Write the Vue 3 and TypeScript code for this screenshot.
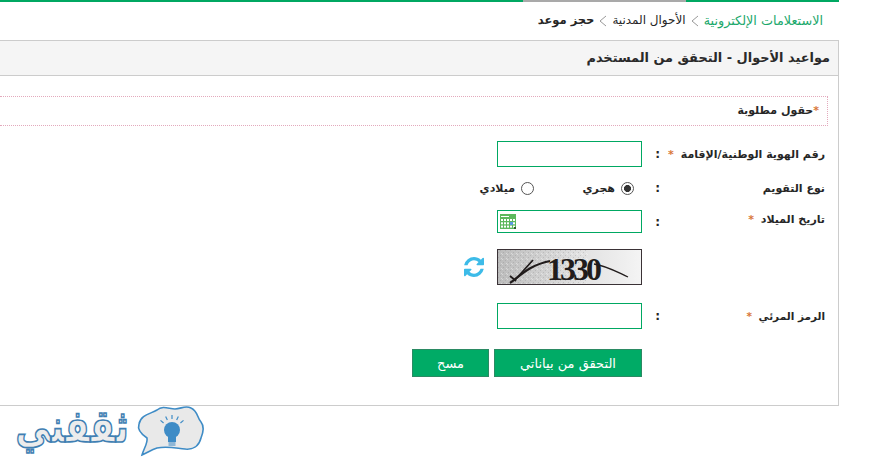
<script setup lang="ts">
const crumbs = ["الاستعلامات الإلكترونية", "الأحوال المدنية", "حجز موعد"];
const calCols = [0, 1, 2, 3, 4];
const calRows = [0, 1, 2];
const rays = [-50, -25, 0, 25, 50];
</script>

<template>
  <div class="page">
    <div class="wrap" dir="rtl">
      <div class="topline" dir="ltr">
        <span class="seg long"></span>
        <span class="seg grey"></span>
        <span class="seg short-seg"></span>
      </div>

      <nav class="crumbs">
        <span class="first">{{ crumbs[0] }}</span>
        <svg class="chev" width="8" height="12" viewBox="0 0 8 12"><path d="M7 1 1 6l6 5" fill="none" stroke="#999" /></svg>
        <span class="mid">{{ crumbs[1] }}</span>
        <svg class="chev" width="8" height="12" viewBox="0 0 8 12"><path d="M7 1 1 6l6 5" fill="none" stroke="#999" /></svg>
        <span class="last">{{ crumbs[2] }}</span>
      </nav>

      <section class="panel">
        <h1 class="head">مواعيد الأحوال - التحقق من المستخدم</h1>
        <div class="body">
          <div class="notice"><span class="star">*</span>حقول مطلوبة</div>

          <div class="row first-row">
            <label class="lbl">رقم الهوية الوطنية/الإقامة <span class="star">*</span></label>
            <span class="colon">:</span>
            <input class="field" type="text" />
          </div>

          <div class="row radio-row">
            <label class="lbl">نوع التقويم</label>
            <span class="colon">:</span>
            <div class="radios">
              <span class="opt"><i class="radio on"></i>هجري</span>
              <span class="opt"><i class="radio"></i>ميلادي</span>
            </div>
          </div>

          <div class="row date-row">
            <label class="lbl date-lbl">تاريخ الميلاد <span class="star">*</span></label>
            <span class="colon">:</span>
            <div class="date">
              <input class="field short" type="text" />
              <svg class="cal" width="16" height="15" viewBox="0 0 16 15">
                <rect width="16" height="15" fill="#5cb85c" />
                <rect x="1" y="2" width="8" height="1" fill="#fff" />
                <template v-for="r in calRows" :key="r">
                  <rect v-for="c in calCols" :key="c" :x="1 + c * 3" :y="5 + r * 3.3" width="2" height="2" fill="#fff" />
                </template>
                <rect x="10" y="8" width="3" height="3" fill="#5a9be0" />
                <rect x="14" y="13" width="2" height="2" fill="#2c5b2c" />
              </svg>
            </div>
          </div>

          <div class="row captcha-row">
            <span class="lbl"></span>
            <span class="colon"></span>
            <svg class="captcha" width="145" height="36" viewBox="0 0 145 36">
              <defs>
                <linearGradient id="capbg" x1="0" x2="1" y1="0" y2="0">
                  <stop offset="0" stop-color="#bcbcbc" />
                  <stop offset="0.55" stop-color="#e0e0e0" />
                  <stop offset="1" stop-color="#f4f4f4" />
                </linearGradient>
                <pattern id="capdots" width="5" height="5" patternUnits="userSpaceOnUse">
                  <rect x="0" y="0" width="1" height="1" fill="#fff" fill-opacity="0.4" />
                  <rect x="3" y="1" width="1" height="1" fill="#777" fill-opacity="0.25" />
                  <rect x="1" y="3" width="1" height="1" fill="#777" fill-opacity="0.25" />
                  <rect x="4" y="4" width="1" height="1" fill="#fff" fill-opacity="0.4" />
                </pattern>
              </defs>
              <rect x="0.5" y="0.5" width="144" height="35" fill="url(#capbg)" />
              <rect x="1" y="1" width="90" height="34" fill="url(#capdots)" />
              <rect x="0.5" y="0.5" width="144" height="35" fill="none" stroke="#3a3236" />
              <text x="76" y="31" text-anchor="middle" direction="ltr" class="captcha-text">1330</text>
              <path d="M13 34C22 28 32 16 53 12" fill="none" stroke="#211c1c" stroke-width="2.2" />
              <path d="M18 31 36 11M13 27l6 5" fill="none" stroke="#211c1c" stroke-width="1.8" />
              <path d="M97 15C110 17 120 23 131 28" fill="none" stroke="#211c1c" stroke-width="1.3" />
            </svg>
            <svg class="refresh" width="20" height="20" viewBox="0 0 1536 1536">
              <path fill="#3dbbe8" d="M1511 928q0 5-1 7-64 268-268 434.500t-478 166.500q-146 0-282.500-55t-243.500-157l-129 129q-19 19-45 19t-45-19-19-45v-448q0-26 19-45t45-19h448q26 0 45 19t19 45-19 45l-137 137q71 66 161 102t187 36q134 0 250-65t186-179q11-17 53-117 8-23 30-23h192q13 0 22.500 9.500t9.500 22.500zm25-800v448q0 26-19 45t-45 19h-448q-26 0-45-19t-19-45 19-45l138-138q-148-137-349-137-134 0-250 65t-186 179q-11 17-53 117-8 23-30 23h-199q-13 0-22.500-9.500t-9.500-22.500v-7q65-268 270-434.500t480-166.500q146 0 284 55.500t245 156.500l130-129q19-19 45-19t45 19 19 45z" />
            </svg>
          </div>

          <div class="row code-row">
            <label class="lbl code-lbl">الرمز المرئي <span class="star">*</span></label>
            <span class="colon">:</span>
            <input class="field" type="text" />
          </div>

          <div class="row btn-row">
            <span class="lbl"></span>
            <span class="colon"></span>
            <button class="btn main" type="button">التحقق من بياناتي</button>
            <button class="btn alt" type="button">مسح</button>
          </div>
        </div>
      </section>
    </div>

    <div class="logo">
      <svg width="195" height="60" viewBox="0 0 195 60">
        <text transform="translate(55 42) scale(1 1.3)" text-anchor="middle" direction="rtl" class="logo-text">ثقفني</text>
        <path d="M125 55C127 48 131 43 130 38 124 34 120 30 122 24 124 14 134 14 140 10 146 5 152 9 158 9 164 9 168 5 174 8 181 11 180 18 184 22 188 27 186 33 184 38 182 46 176 50 168 49 158 48 150 46 140 48 134 50 130 53 125 55Z" fill="#e9e9e9" stroke="#3f8cc6" stroke-width="1.6" />
        <circle cx="155" cy="30" r="8" fill="#3f8cc6" />
        <rect x="151" y="35" width="8" height="7" fill="#3f8cc6" />
        <rect x="151.500" y="42" width="7" height="4" fill="#8fb7d6" />
        <g stroke="#3f8cc6" stroke-width="1.2">
          <line v-for="a in rays" :key="a" x1="155" y1="19" x2="155" y2="15" :transform="`rotate(${a} 155 30)`" />
        </g>
      </svg>
    </div>
  </div>
</template>

<style scoped>
.page {
  width: 869px;
  height: 470px;
  overflow: hidden;
  background: #fff;
  font-family: "DejaVu Sans", sans-serif;
  font-size: 11px;
  color: #262626;
}
.wrap {
  width: 839px;
}
.topline {
  display: flex;
  height: 2px;
}
.seg {
  background: #00a862;
}
.long {
  flex: 1;
}
.grey {
  width: 163px;
  background: #a9a9a9;
}
.short-seg {
  width: 153px;
}
.crumbs {
  height: 38px;
  box-sizing: border-box;
  padding: 11px 16px 0 0;
  display: flex;
  align-items: flex-start;
  gap: 5px;
  line-height: 15px;
}
.chev {
  margin-top: 2px;
}
.first {
  color: #1aa86c;
  font-size: 12.8px;
}
.mid {
  font-size: 12px;
}
.last {
  font-weight: bold;
  font-size: 11.5px;
}
.panel {
  height: 366px;
  box-sizing: border-box;
  border: 1px solid #ccc;
  border-left: 0;
}
.head {
  margin: 0;
  height: 35px;
  box-sizing: border-box;
  padding: 8px 8px 0 0;
  background: #f5f5f5;
  border-bottom: 1px solid #ccc;
  font-size: 12.9px;
  line-height: 18px;
  font-weight: bold;
  color: #2a2a2a;
}
.body {
  padding-top: 20px;
}
.notice {
  height: 30px;
  box-sizing: border-box;
  margin-right: 10px;
  padding: 5px 8px 0 0;
  border: 1px dotted #e3a9bc;
  border-left: 0;
  font-weight: bold;
  line-height: 18px;
}
.star {
  color: #d9783a;
  font-weight: bold;
}
.lbl .star {
  margin-right: 3px;
}
.row {
  display: flex;
  align-items: center;
  padding-right: 13px;
}
.lbl {
  width: 160px;
  font-weight: bold;
  white-space: nowrap;
}
.date-lbl {
  padding-bottom: 5px;
}
.code-lbl {
  font-size: 10.5px;
}
.colon {
  width: 23px;
  box-sizing: border-box;
  padding-right: 5px;
  font-weight: bold;
  font-size: 12px;
}
.field {
  width: 145px;
  height: 26px;
  box-sizing: border-box;
  border: 1px solid #00a862;
  background: #fff;
  padding: 0;
  margin: 0;
  outline: none;
}
.first-row {
  margin-top: 15px;
}
.radio-row {
  margin-top: 8px;
  height: 26px;
}
.radios {
  display: flex;
  padding-right: 8px;
}
.opt {
  width: 100px;
  display: flex;
  align-items: center;
  gap: 6px;
  font-weight: bold;
}
.radio {
  width: 13px;
  height: 13px;
  box-sizing: border-box;
  border: 1px solid #555;
  border-radius: 50%;
  background: #fff;
  display: block;
}
.radio.on {
  background: radial-gradient(circle, #333 0 3.2px, #fff 3.8px);
}
.date-row {
  margin-top: 9px;
}
.date {
  position: relative;
  height: 23px;
}
.short {
  height: 23px;
  display: block;
}
.cal {
  position: absolute;
  left: 3px;
  top: 4px;
}
.captcha-row {
  margin-top: 16px;
}
.captcha {
  display: block;
  overflow: visible;
}
.captcha-text {
  font-family: "Liberation Serif", serif;
  font-weight: bold;
  font-size: 32px;
  fill: #211c1c;
  letter-spacing: -3px;
}
.refresh {
  display: block;
  margin-right: 13px;
}
.code-row {
  margin-top: 18px;
}
.btn-row {
  margin-top: 20px;
}
.btn {
  height: 28px;
  box-sizing: border-box;
  padding: 0;
  margin: 0;
  border: 1px solid #2b8a63;
  background: #00ab66;
  color: #fff;
  font-family: inherit;
  font-size: 13px;
}
.main {
  width: 148px;
}
.alt {
  width: 77px;
  margin-right: 5px;
}
.logo {
  padding-left: 17px;
  margin-top: -6px;
}
.logo svg {
  display: block;
  overflow: visible;
}
.logo-text {
  font-family: "DejaVu Sans", sans-serif;
  font-weight: bold;
  font-size: 35px;
  fill: #ececec;
  stroke: #3f7fb3;
  stroke-width: 1.3;
}
</style>

<style>
html,
body {
  margin: 0;
  overflow: hidden;
}
</style>
